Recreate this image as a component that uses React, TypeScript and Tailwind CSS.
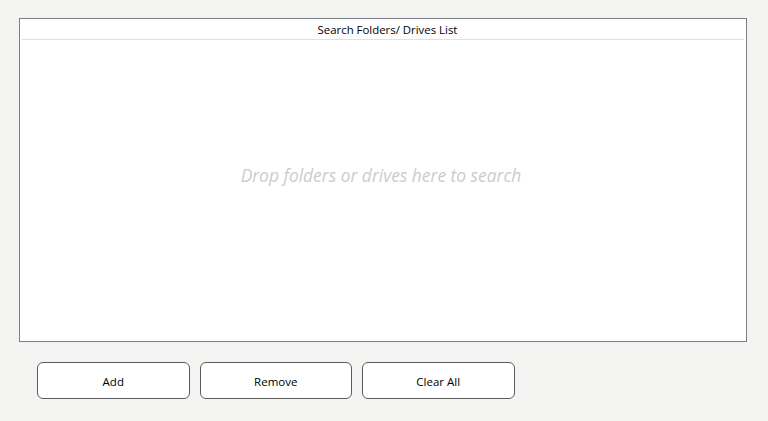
const font = "font-['Segoe_UI','Open_Sans','Noto_Sans',sans-serif]";

function ActionButton({ label }: { label: string }) {
    return (
        <button className="w-[152.5px] h-[37px] pt-[2px] bg-white border border-[#5c5c5c] rounded-[6px] text-[11.5px] text-black">
            {label}
        </button>
    );
}

export default function App() {
    return (
        <div className={`w-[768px] h-[421px] bg-[#f3f3f2] pl-[19px] pt-[18px] ${font}`}>
            <div className="w-[728px] h-[324px] bg-white border border-[#7b7e85] flex flex-col">
                <div className="mx-[2px] h-[21px] pt-[2px] pl-[9px] border-b border-[#e0e0e0] flex items-center justify-center text-[11.4px] text-black">
                    Search Folders/ Drives List
                </div>
                <div className="flex-1 flex items-center justify-center pb-[30px] pr-[4px]">
                    <span className="italic text-[17.4px] text-[#cccccc]">Drop folders or drives here to search</span>
                </div>
            </div>
            <div className="flex gap-[10px] pl-[18px] mt-[20px]">
                <ActionButton label="Add" />
                <ActionButton label="Remove" />
                <ActionButton label="Clear All" />
            </div>
        </div>
    );
}
